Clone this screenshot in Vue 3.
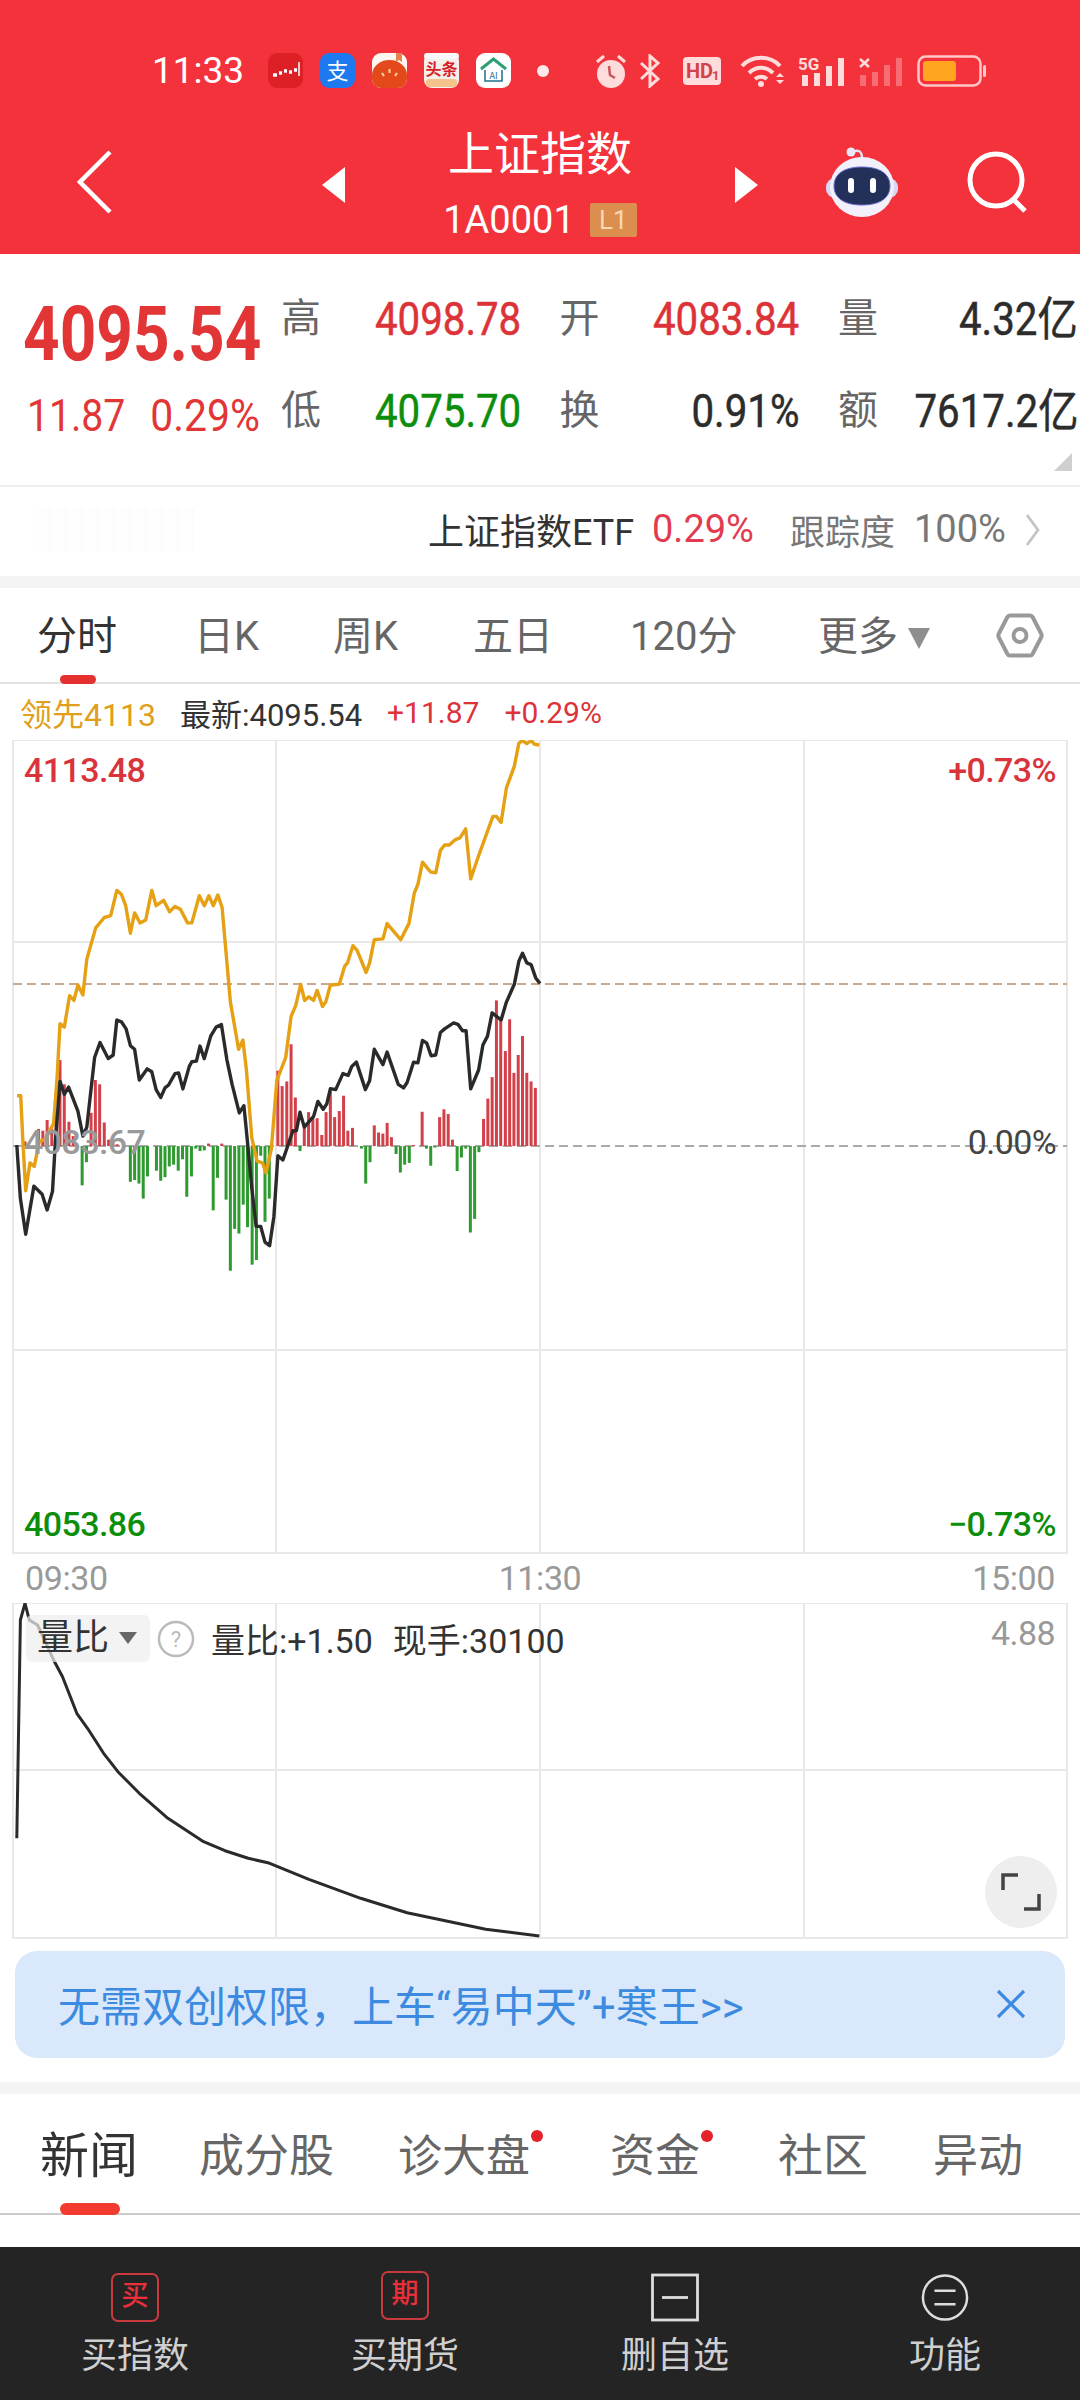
<script setup>
const pts = (arr) => {
  const out = []
  for (let i = 0; i < arr.length; i += 2) out.push((arr[i] / 2.8).toFixed(1) + ',' + (720 + arr[i + 1] / 2.8).toFixed(1))
  return out.join(' ')
}
const yellow = pts([48,1052,58,1052,64,1180,72,1318,84,1240,96,1250,110,1180,125,1175,150,1130,160,1000,168,850,180,860,195,772,207,785,218,742,232,770,243,670,268,582,292,553,310,548,327,477,340,488,352,520,365,597,377,540,392,568,408,560,425,477,437,520,458,505,475,537,490,522,505,530,525,568,537,568,558,492,572,520,585,492,597,520,610,490,622,525,632,640,645,790,668,922,680,896,690,980,705,1170,720,1235,735,1240,745,1268,760,1200,775,1010,800,945,815,830,828,800,842,740,853,785,865,775,878,785,888,757,903,802,912,790,925,742,950,740,965,690,973,680,988,632,1000,645,1025,707,1035,680,1048,615,1072,613,1084,570,1122,615,1145,570,1160,485,1170,460,1183,398,1205,425,1220,428,1233,365,1245,350,1258,350,1275,335,1288,330,1304,305,1318,445,1340,380,1380,270,1390,270,1403,287,1418,190,1440,130,1453,65,1463,58,1475,66,1487,58,1497,68,1510,70])
const black = pts([47,1190,57,1340,72,1440,95,1305,118,1328,132,1372,147,1320,155,1180,168,1012,180,1048,192,1028,218,1095,232,1165,243,1140,265,945,280,903,303,948,317,938,327,840,340,845,353,865,365,912,377,922,390,1008,412,977,425,985,437,1035,450,1057,462,1030,472,1022,490,990,500,988,512,1033,530,970,537,957,550,955,560,913,572,948,590,885,605,860,620,853,635,950,650,1020,670,1100,683,1080,692,1170,705,1310,717,1418,730,1418,742,1462,755,1472,767,1390,778,1220,792,1232,820,1150,830,1150,840,1098,852,1140,878,1110,890,1068,905,1090,915,1075,925,1032,940,1035,960,990,975,995,985,970,998,958,1023,1035,1035,1010,1048,922,1072,965,1084,930,1115,1020,1130,1030,1140,1015,1158,958,1170,960,1183,897,1195,905,1207,940,1220,938,1233,875,1245,865,1270,848,1282,852,1295,870,1305,870,1318,1033,1340,980,1352,910,1365,885,1378,820,1403,840,1418,790,1440,740,1453,675,1463,653,1475,680,1487,685,1500,722,1512,738])
const barData = [[70,1180],[108,1145],[120,1150],[132,1120],[145,1145],[157,1100],[168,952],[180,1020],[193,1125],[205,1165],[255,1100],[267,1008],[279,1020],[292,1127],[304,1175],[316,1180],[328,1188],
[230,1303],[242,1238],[365,1293],[377,1288],[389,1298],[401,1340],[413,1278],[438,1262],[450,1290],[462,1280],[474,1250],[486,1245],[499,1262],[511,1230],[523,1335],[536,1278],[548,1200],[560,1207],[572,1205],[584,1186],[597,1373],[609,1282],[621,1186],[633,1343],[645,1542],[657,1425],[669,1438],[681,1357],[693,1420],[706,1525],[718,1512],[730,1220],[742,1405],[754,1340],
[778,982],[790,1025],[803,1012],[815,908],[827,1057],[840,1207],[852,1140],[864,1098],[876,1115],[888,1115],[901,1162],[913,1098],[925,1040],[937,1112],[950,1095],[962,1052],[974,1150],[987,1142],[1012,1200],[1024,1298],[1036,1238],
[1048,1135],[1060,1155],[1072,1158],[1084,1128],[1096,1168],[1109,1215],[1121,1267],[1133,1245],[1146,1240],[1158,1190],[1182,1097],[1194,1200],[1206,1248],[1218,1197],[1231,1112],[1243,1090],[1255,1103],[1267,1175],[1280,1263],[1292,1225],[1304,1200],[1317,1435],[1329,1397],[1341,1210],
[1354,1117],[1366,1060],[1378,1000],[1390,785],[1402,838],[1415,927],[1427,838],[1439,988],[1451,938],[1463,885],[1475,988],[1487,1012],[1499,1030]]
const base = 1193
const bars = barData.map(([x, y]) => ({
  x: x / 2.8 - 1.5,
  y: 720 + Math.min(y, base) / 2.8,
  h: Math.abs(y - base) / 2.8,
  fill: y < base ? '#D2414A' : '#2F9A2F',
}))
const ratioRaw = [47,895,57,240,70,190,82,240,105,255,125,300,150,360,175,410,215,520,245,565,290,640,330,695,390,760,470,835,570,905,630,932,695,955,750,968,865,1018,1010,1075,1140,1118,1360,1168,1510,1188]
const ratio = []
for (let i = 0; i < ratioRaw.length; i += 2) ratio.push((ratioRaw[i] / 2.8).toFixed(1) + ',' + (1540 + ratioRaw[i + 1] / 3).toFixed(1))
const ratioLine = ratio.join(' ')

const stats = [
  { label: '高', value: '4098.78', cls: 'red' },
  { label: '开', value: '4083.84', cls: 'red' },
  { label: '量', value: '4.32亿', cls: 'dark' },
  { label: '低', value: '4075.70', cls: 'green' },
  { label: '换', value: '0.91%', cls: 'dark' },
  { label: '额', value: '7617.2亿', cls: 'dark' },
]
const periods = ['日K', '周K', '五日', '120分']
const newsTabs = [
  { t: '新闻', on: true },
  { t: '成分股' },
  { t: '诊大盘', dot: true },
  { t: '资金', dot: true },
  { t: '社区' },
  { t: '异动' },
]
</script>

<template>
  <div class="page">
    <header class="head">
      <div class="status">
        <span class="time">11:33</span>
        <svg class="app" viewBox="0 0 35 35"><rect width="35" height="35" rx="9" fill="#DD1F26"/><path d="M5 22h4M11 20h3M16 18h3M21 19h3M26 17h3" stroke="#fff" stroke-width="3.500"/><path d="M31 9v14" stroke="#fff" stroke-width="1.500"/></svg>
        <svg class="app" viewBox="0 0 35 35"><rect width="35" height="35" rx="9" fill="#1E78F0"/><text x="17.500" y="26" text-anchor="middle" class="appt" font-size="22" fill="#fff">支</text></svg>
        <svg class="app" viewBox="0 0 35 35"><rect width="35" height="35" rx="9" fill="#FFF6EF"/><path d="M0 22a17.500 15 0 0 1 35 0v4a9 9 0 0 1-9 9H9a9 9 0 0 1-9-9z" fill="#E4491C"/><path d="M24 0h6v9l-3-2-3 2z" fill="#E8824A"/><path d="M17.500 16v4M10 20l2 3M25 20l-2 3" stroke="#FFD9A0" stroke-width="2"/></svg>
        <svg class="app" viewBox="0 0 35 35"><rect width="35" height="35" rx="8" fill="#F5F0EC"/><rect width="35" height="6" rx="3" fill="#F8F8F8"/><text x="17.500" y="22" text-anchor="middle" class="appt" font-size="16" font-weight="700" fill="#D81E28">头条</text><rect x="2" y="26" width="31" height="8" rx="3" fill="#F5C28B"/></svg>
        <svg class="app" viewBox="0 0 35 35"><rect width="35" height="35" rx="9" fill="#fff"/><path d="M5 16L17.500 6 30 16" fill="none" stroke="#2E9F72" stroke-width="3"/><path d="M9 17v11h17V17" fill="none" stroke="#1F6F8E" stroke-width="1.500"/><text x="17.500" y="26" text-anchor="middle" class="appt" font-size="9" fill="#1F6F8E">AI</text></svg>
        <span class="sdot"></span>
        <svg class="ic alarm" viewBox="0 0 34 36"><circle cx="17" cy="21" r="14" fill="#FFDCDC"/><path d="M3 9l7-6M31 9l-7-6" stroke="#FFDCDC" stroke-width="3"/><path d="M15 13l1 9 5 3" fill="none" stroke="#C9555C" stroke-width="2.500"/></svg>
        <svg class="ic bt" viewBox="0 0 22 34"><path d="M2 9l17 16-8 7V2l8 7L2 25" fill="none" stroke="#FFDCDC" stroke-width="3"/></svg>
        <svg class="ic hd" viewBox="0 0 38 28"><rect width="38" height="28" rx="4" fill="#FFDCDC"/><text x="3" y="21" class="hdt" font-size="20" font-weight="700" fill="#D2424A">HD</text><text x="29" y="23" class="hdt" font-size="13" font-weight="700" fill="#D2424A">1</text></svg>
        <svg class="ic wifi" viewBox="0 0 46 32"><path d="M2 11C12 0 30 0 40 11M9 18c7-7 17-7 24 0M15 24c4-3 8-3 12 0" fill="none" stroke="#FFDCDC" stroke-width="4"/><circle cx="21" cy="29" r="3" fill="#FFDCDC"/><path d="M36 22l4-4 4 4zM36 25l4 4 4-4z" fill="#FFDCDC"/></svg>
        <svg class="ic sig" viewBox="0 0 47 32"><text x="0" y="15" class="hdt" font-size="17" font-weight="700" fill="#FFDCDC">5G</text><rect x="4" y="20" width="6" height="11" fill="#FFDCDC"/><rect x="16" y="18" width="6" height="13" fill="#FFDCDC"/><rect x="28" y="11" width="6" height="20" fill="#FFDCDC"/><rect x="40" y="3" width="6" height="28" fill="#FFDCDC"/></svg>
        <svg class="ic sig2" viewBox="0 0 44 32"><path d="M1 4l9 8M10 4l-9 8" stroke="#FFDCDC" stroke-width="2.500"/><g fill="#FFDCDC" opacity=".35"><rect x="1" y="20" width="6" height="11"/><rect x="13" y="17" width="6" height="14"/><rect x="25" y="10" width="6" height="21"/><rect x="37" y="3" width="6" height="28"/></g></svg>
        <svg class="ic bat" viewBox="0 0 70 32"><rect x="1.500" y="1.500" width="62" height="29" rx="7" fill="none" stroke="#FFC7C7" stroke-width="2.500"/><rect x="6" y="6" width="33" height="20" rx="3" fill="#FFA51F"/><rect x="66" y="10" width="3" height="12" rx="1.500" fill="#FFC7C7"/></svg>
      </div>
      <nav class="nav">
        <svg class="back" viewBox="0 0 35 64"><path d="M33 2L3 32l30 30" fill="none" stroke="#fff" stroke-width="4.500"/></svg>
        <span class="tri left"></span>
        <div class="title">
          <div class="t1">上证指数</div>
          <div class="t2"><span>1A0001</span><b>L1</b></div>
        </div>
        <span class="tri right"></span>
        <svg class="robot" viewBox="0 0 74 72">
          <path d="M27 6c6-3 10-1 10 6" fill="none" stroke="#E4E2F5" stroke-width="2.500"/>
          <circle cx="26" cy="6" r="4.500" fill="#E9E7F8"/>
          <rect x="1" y="32" width="72" height="20" rx="9" fill="#DAD6F2"/>
          <ellipse cx="37" cy="41" rx="32" ry="30" fill="#F1F0FB"/>
          <path d="M9 40c0-12 10-19 28-19s28 7 28 19-10 19-28 19S9 52 9 40z" fill="#22305A" stroke="#6F6BD0" stroke-width="1"/>
          <rect x="23" y="32" width="6" height="15" rx="3" fill="#fff"/>
          <rect x="45" y="32" width="6" height="15" rx="3" fill="#fff"/>
        </svg>
        <svg class="search" viewBox="0 0 60 62"><circle cx="29" cy="29" r="26" fill="none" stroke="#fff" stroke-width="5"/><path d="M47 49l11 11" stroke="#fff" stroke-width="5"/></svg>
      </nav>
    </header>

    <section class="quote">
      <div class="main">
        <div class="price">4095.54</div>
        <div class="chg"><span>11.87</span><span>0.29%</span></div>
      </div>
      <div class="grid">
        <div v-for="s in stats" :key="s.label" class="stat">
          <span class="lab">{{ s.label }}</span>
          <span class="val" :class="s.cls">{{ s.value }}</span>
        </div>
      </div>
      <span class="corner"></span>
    </section>

    <section class="etf">
      <span class="ghost"></span>
      <span class="etf-name">上证指数ETF</span>
      <span class="etf-pct">0.29%</span>
      <span class="etf-lab">跟踪度</span>
      <span class="etf-val">100%</span>
      <svg class="etf-go" viewBox="0 0 16 34"><path d="M2 2l11 15L2 32" fill="none" stroke="#C4C4C4" stroke-width="2.800"/></svg>
    </section>

    <div class="band"></div>

    <section class="periods">
      <div class="pd on">分时<i></i></div>
      <div v-for="p in periods" :key="p" class="pd">{{ p }}</div>
      <div class="pd more">更多<span class="caret"></span></div>
      <svg class="hex" viewBox="0 0 48 45"><path d="M14 2.500h20a3 3 0 0 1 2.600 1.500l8.500 16.500a4 4 0 0 1 0 4L36.600 41a3 3 0 0 1-2.600 1.500H14a3 3 0 0 1-2.600-1.500L2.900 24.500a4 4 0 0 1 0-4L11.400 4a3 3 0 0 1 2.600-1.500z" fill="none" stroke="#999" stroke-width="4"/><circle cx="24" cy="22.500" r="6.500" fill="none" stroke="#999" stroke-width="4"/></svg>
    </section>

    <section class="legend">
      <span class="lead">领先4113</span>
      <span class="now">最新:4095.54</span>
      <span class="up">+11.87</span>
      <span class="up">+0.29%</span>
    </section>

    <section class="chart">
      <svg class="plot" width="1080" height="814" viewBox="0 740 1080 814">
        <g stroke="#E8E8E8" stroke-width="2" fill="none">
          <rect x="13" y="740" width="1054" height="813"/>
          <path d="M276 740v813M540 740v813M804 740v813M13 942h1054M13 1350h1054"/>
        </g>
        <path d="M13 984h1054" stroke="#C9A88E" stroke-width="2" stroke-dasharray="9 5"/>
        <path d="M13 1146h1054" stroke="#AAAAAA" stroke-width="2" stroke-dasharray="9 5"/>
        <rect v-for="(b, i) in bars" :key="i" :x="b.x" :y="b.y" width="3" :height="b.h" :fill="b.fill"/>
        <polyline :points="yellow" fill="none" stroke="#E5A013" stroke-width="3.400" stroke-linejoin="round"/>
        <polyline :points="black" fill="none" stroke="#2A2A2A" stroke-width="3.400" stroke-linejoin="round"/>
      </svg>
      <span class="lb l tp r1">4113.48</span>
      <span class="lb rr tp r1">+0.73%</span>
      <span class="lb l mid grey">4083.67</span>
      <span class="lb rr mid zero">0.00%</span>
      <span class="lb l bt0 g1">4053.86</span>
      <span class="lb rr bt0 g1">−0.73%</span>
    </section>

    <section class="times"><span>09:30</span><span>11:30</span><span>15:00</span></section>

    <section class="sub">
      <svg class="plot" width="1080" height="336" viewBox="0 1603 1080 336">
        <g stroke="#E8E8E8" stroke-width="2" fill="none">
          <rect x="13" y="1603" width="1054" height="335"/>
          <path d="M276 1603v335M540 1603v335M804 1603v335M13 1770h1054"/>
        </g>
        <polyline :points="ratioLine" fill="none" stroke="#2A2A2A" stroke-width="3" stroke-linejoin="round"/>
      </svg>
      <div class="subbar">
        <div class="chip">量比<span class="caret small"></span></div>
        <svg class="help" viewBox="0 0 38 38"><circle cx="19" cy="19" r="17" fill="none" stroke="#bbb" stroke-width="2.500"/><text x="19" y="27" text-anchor="middle" class="hdt" font-size="22" fill="#bbb">?</text></svg>
        <span class="subtxt">量比:+1.50</span>
        <span class="subtxt">现手:30100</span>
      </div>
      <span class="maxv">4.88</span>
      <button class="expand"><svg viewBox="0 0 72 72" width="72" height="72"><path d="M18 34V19h15M54 38v15H39" fill="none" stroke="#444" stroke-width="3.500"/></svg></button>
    </section>

    <section class="banner">
      <span>无需双创权限，上车“易中天”+寒王&gt;&gt;</span>
      <svg class="close" viewBox="0 0 30 30"><path d="M2 2l26 26M28 2L2 28" stroke="#3D8BE0" stroke-width="3.200"/></svg>
    </section>

    <div class="band band2"></div>

    <section class="news">
      <div v-for="n in newsTabs" :key="n.t" class="nt" :class="{ on: n.on }">{{ n.t }}<em v-if="n.dot"></em><i v-if="n.on"></i></div>
    </section>

    <div class="spacer"></div>

    <footer class="foot">
      <div class="fi">
        <span class="box">买</span>
        <span class="ft">买指数</span>
      </div>
      <div class="fi">
        <span class="box up2">期</span>
        <span class="ft">买期货</span>
      </div>
      <div class="fi">
        <svg class="fic" viewBox="0 0 48 48"><rect x="1.500" y="1.500" width="45" height="45" fill="none" stroke="#DDD" stroke-width="2.800"/><path d="M11 24h26" stroke="#DDD" stroke-width="2.800"/></svg>
        <span class="ft">删自选</span>
      </div>
      <div class="fi">
        <svg class="fic" viewBox="0 0 50 50"><circle cx="25" cy="25" r="23" fill="none" stroke="#DDD" stroke-width="2.600"/><path d="M14 18h22M14 32h22" stroke="#DDD" stroke-width="2.800"/></svg>
        <span class="ft">功能</span>
      </div>
    </footer>
  </div>
</template>

<style scoped>
.page { width: 1080px; height: 2400px; overflow: hidden; background: #fff; display: flex; flex-direction: column; font-family: Roboto, "Noto Sans CJK SC", sans-serif; color: #333; }
.head { background: #F4323B; height: 254px; color: #fff; flex: none; }
.status { height: 110px; display: flex; align-items: center; padding: 31px 0 0 152px; box-sizing: border-box; }
.time { font-size: 37px; color: #fff; width: 116px; line-height: 1; }
.app { width: 35px; height: 35px; margin-right: 17px; flex: none; }
.appt { font-family: "Noto Sans CJK SC", sans-serif; }
.hdt { font-family: Roboto, sans-serif; }
.sdot { width: 12px; height: 12px; border-radius: 50%; background: #FFE8E8; margin: 0 0 0 9px; }
.ic { flex: none; }
.alarm { width: 34px; height: 36px; margin-left: 45px; }
.bt { width: 22px; height: 34px; margin-left: 11px; }
.hd { width: 38px; height: 28px; margin-left: 22px; }
.wifi { width: 46px; height: 32px; margin-left: 19px; }
.sig { width: 47px; height: 32px; margin-left: 12px; }
.sig2 { width: 44px; height: 32px; margin-left: 14px; }
.bat { width: 70px; height: 32px; margin-left: 14px; }
.nav { height: 144px; display: flex; align-items: center; padding-left: 77px; }
.back { width: 35px; height: 64px; }
.tri { width: 0; height: 0; border-top: 18px solid transparent; border-bottom: 18px solid transparent; margin-top: 6px; flex: none; }
.tri.left { border-right: 23px solid #fff; margin-left: 210px; }
.tri.right { border-left: 23px solid #fff; }
.title { width: 390px; height: 144px; text-align: center; box-sizing: border-box; padding-top: 11px; }
.t1 { font-size: 46px; line-height: 66px; }
.t2 { display: flex; justify-content: center; align-items: center; margin-top: 7px; height: 52px; font-size: 38px; }
.t2 b { font-weight: 400; font-size: 26px; background: #DC8E4E; color: #F6D8B8; width: 47px; height: 34px; line-height: 34px; margin-left: 15px; border-radius: 2px; }
.robot { width: 74px; height: 72px; margin-left: 67px; }
.search { width: 60px; height: 62px; margin-left: 68px; }

.quote { position: relative; height: 231px; display: flex; flex: none; }
.main { width: 281px; padding-left: 23px; box-sizing: border-box; }
.price { font-size: 76px; font-weight: 700; color: #E23636; line-height: 84px; margin-top: 38px; transform: scaleX(.84); transform-origin: left center; white-space: nowrap; }
.chg { display: flex; justify-content: space-between; width: 237px; margin-top: 15px; padding-left: 4px; box-sizing: border-box; color: #E23636; font-size: 44px; line-height: 50px; }
.chg span { display: inline-block; transform: scaleX(.89); transform-origin: left center; }
.chg span + span { transform: scaleX(.93); transform-origin: right center; }
.grid { display: grid; grid-template-columns: repeat(3, 240px); column-gap: 38.500px; row-gap: 42px; padding-top: 40px; align-content: start; }
.stat { display: flex; justify-content: space-between; align-items: center; height: 50px; }
.lab { font-size: 40px; color: #666; line-height: 50px; }
.val { display: inline-block; font-size: 46px; font-weight: 400; line-height: 50px; transform: scaleX(.875); transform-origin: right center; white-space: nowrap; -webkit-text-stroke: .5px currentColor; }
.val.red { color: #DC3339; }
.val.green { color: #0C8E0C; }
.val.dark { color: #2C2C2C; }
.corner { position: absolute; right: 8px; top: 199px; width: 0; height: 0; border-left: 18px solid transparent; border-bottom: 18px solid #CFCFCF; }

.etf { height: 91px; border-top: 2px solid #EEE; box-sizing: border-box; display: flex; align-items: center; position: relative; padding: 0 0 5px 428px; flex: none; }
.ghost { position: absolute; left: 35px; top: 20px; width: 160px; height: 45px; background: repeating-linear-gradient(90deg, #FEFEFE 0 12px, #FCFCFC 12px 16px); }
.etf-name { font-size: 36px; color: #333; width: 224px; white-space: nowrap; }
.etf-pct { font-size: 38px; color: #E23A50; width: 138px; }
.etf-lab { font-size: 35px; color: #777; width: 124px; white-space: nowrap; }
.etf-val { font-size: 38px; color: #777; width: 111px; }
.etf-go { width: 16px; height: 34px; margin-top: 2px; }
.band { height: 12px; background: #F4F4F4; flex: none; }

.periods { height: 96px; border-bottom: 2px solid #E4E4E4; box-sizing: border-box; display: flex; align-items: center; position: relative; font-size: 40px; color: #666; flex: none; }
.pd { position: absolute; top: 22px; line-height: 54px; white-space: nowrap; }
.pd.on { left: 37px; color: #333; }
.pd.on i { position: absolute; left: 23px; top: 65px; width: 36px; height: 9px; border-radius: 5px; background: #E4312F; }
.pd:nth-child(2) { left: 194px; }
.pd:nth-child(3) { left: 333px; }
.pd:nth-child(4) { left: 473px; }
.pd:nth-child(5) { left: 630px; }
.pd.more { left: 818px; }
.caret { display: inline-block; width: 0; height: 0; border-left: 11px solid transparent; border-right: 11px solid transparent; border-top: 21px solid #8E8E8E; margin-left: 10px; vertical-align: 1px; }
.hex { position: absolute; left: 996px; top: 25px; width: 48px; height: 45px; }

.legend { height: 56px; display: flex; align-items: center; padding-left: 20px; font-size: 31px; flex: none; white-space: nowrap; }
.lead { color: #DFA020; font-size: 32px; width: 160px; }
.now { color: #333; width: 207px; }
.up { color: #DC3339; font-size: 30px; margin-right: 25px; }

.chart { position: relative; height: 813px; flex: none; }
.plot { display: block; position: absolute; left: 0; top: 0; }
.lb { position: absolute; font-size: 34px; line-height: 40px; font-weight: 500; white-space: nowrap; letter-spacing: -.6px; }
.lb.l { left: 24px; }
.lb.rr { right: 24px; }
.tp { top: 10px; }
.mid { top: 382px; }
.bt0 { top: 764px; }
.r1 { color: #D9343B; }
.grey { color: #999; }
.zero { color: #444; font-weight: 400; }
.g1 { color: #0C8E0C; }
.times { height: 50px; display: flex; justify-content: space-between; align-items: center; padding: 0 25px; font-size: 34px; color: #999; flex: none; letter-spacing: -.4px; }
.sub { position: relative; height: 335px; flex: none; }
.subbar { position: absolute; left: 26px; top: 12px; display: flex; align-items: center; height: 47px; white-space: nowrap; }
.chip { width: 124px; height: 47px; background: rgba(238,238,238,.72); border-radius: 6px; font-size: 36px; color: #333; padding-left: 11px; box-sizing: border-box; line-height: 47px; }
.caret.small { border-left-width: 9px; border-right-width: 9px; border-top-width: 12px; border-top-color: #666; margin-left: 10px; vertical-align: 6px; }
.help { width: 38px; height: 38px; margin-left: 7px; }
.subtxt { font-size: 34px; color: #333; margin-left: 16px; }
.subtxt + .subtxt { margin-left: 20px; }
.maxv { position: absolute; right: 25px; top: 10px; font-size: 34px; line-height: 40px; color: #999; letter-spacing: -.6px; }
.expand { position: absolute; left: 985px; top: 253px; width: 72px; height: 72px; border-radius: 50%; background: #EEE; border: 0; padding: 0; }
.expand svg { display: block; }

.banner { margin: 13px 15px 0; height: 107px; background: #D9E8FA; border-radius: 22px; display: flex; align-items: center; justify-content: space-between; padding: 0 39px 2px 43px; box-sizing: border-box; font-size: 42px; color: #3D8BE0; flex: none; white-space: nowrap; }
.close { width: 30px; height: 30px; }
.band2 { margin-top: 24px; }
.news { height: 121px; border-bottom: 2px solid #CCC; box-sizing: border-box; position: relative; font-size: 45px; color: #666; flex: none; white-space: nowrap; }
.nt { position: absolute; top: 31px; line-height: 64px; }
.nt:nth-child(1) { left: 40px; font-size: 49px; color: #333; }
.nt:nth-child(2) { left: 199px; }
.nt:nth-child(3) { left: 398px; font-size: 44px; }
.nt:nth-child(4) { left: 610px; }
.nt:nth-child(5) { left: 778px; }
.nt:nth-child(6) { left: 933px; }
.nt em { position: absolute; right: -13px; top: 5px; width: 12px; height: 12px; border-radius: 50%; background: #E3222A; }
.nt i { position: absolute; left: 20px; top: 78px; width: 60px; height: 12px; border-radius: 6px; background: #F33A2E; }
.spacer { flex: 1; }
.foot { height: 153px; background: #242424; display: grid; grid-template-columns: repeat(4, 270px); flex: none; }
.fi { display: flex; flex-direction: column; align-items: center; padding-top: 26px; box-sizing: border-box; }
.box { width: 48px; height: 49px; flex: none; box-sizing: border-box; border: 2.500px solid #C93A3E; border-radius: 7px; color: #EE303A; font-size: 27px; text-align: center; line-height: 43px; -webkit-text-stroke: .4px currentColor; }
.box.up2 { transform: translateY(-2px); }
.fic { width: 48px; height: 49px; flex: none; }
.ft { font-size: 36px; color: #CFCFCF; line-height: 44px; margin-top: 12px; white-space: nowrap; }
</style>

<style>
html, body { margin: 0; padding: 0; background: #fff; }
</style>
